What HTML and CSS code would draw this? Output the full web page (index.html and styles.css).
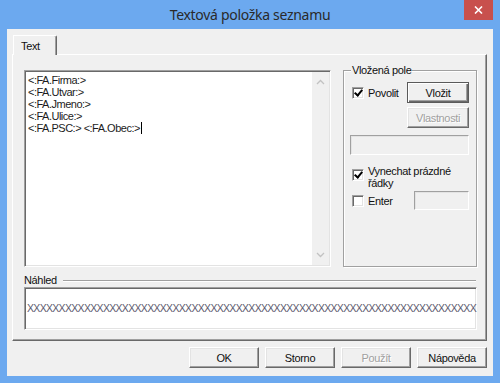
FILE: index.html
```html
<!DOCTYPE html>
<html lang="cs">
<head>
  <meta charset="UTF-8" />
  <title>Textová položka seznamu</title>
  <link rel="stylesheet" href="styles.css">
</head>
<body>
  <div class="window">
    <div class="titlebar">
      <span></span>
      <span class="title">Textová položka seznamu</span>
      <span class="close">
        <svg width="9" height="8" viewBox="0 0 9 8"><path d="M1 0.5 L8 7.5 M8 0.5 L1 7.5" stroke="#fff" stroke-width="1.6"/></svg>
      </span>
    </div>

    <div class="client">
      <div class="tabs">
        <div class="tab">Text</div>
      </div>

      <div class="panel">
        <div class="panel-top">
          <div class="edit">
            <div class="edit-text">
              <div>&lt;:FA.Firma:&gt;</div>
              <div>&lt;:FA.Utvar:&gt;</div>
              <div>&lt;:FA.Jmeno:&gt;</div>
              <div>&lt;:FA.Ulice:&gt;</div>
              <div>&lt;:FA.PSC:&gt; &lt;:FA.Obec:&gt;<span class="caret"></span></div>
            </div>
            <div class="vscroll">
              <svg width="9" height="6" viewBox="0 0 9 6"><path d="M1 5 L4.5 1.5 L8 5" fill="none" stroke="#c2c2c2" stroke-width="1.3"/></svg>
              <svg width="9" height="6" viewBox="0 0 9 6"><path d="M1 1 L4.5 4.5 L8 1" fill="none" stroke="#c2c2c2" stroke-width="1.3"/></svg>
            </div>
          </div>

          <div class="group">
            <div class="group-label">Vložená pole</div>
            <div class="row">
              <label class="check"><span class="box checked"></span>Povolit</label>
              <button class="btn btn-default btn-small">Vložit</button>
            </div>
            <div class="row row-end">
              <button class="btn btn-small" disabled>Vlastnosti</button>
            </div>
            <div class="field field-wide"></div>
            <label class="check check-multi"><span class="box checked"></span>Vynechat prázdné řádky</label>
            <div class="row row-enter">
              <label class="check"><span class="box"></span>Enter</label>
              <div class="field field-short"></div>
            </div>
          </div>
        </div>

        <div class="preview-head">
          <span>Náhled</span>
          <span class="rule"></span>
        </div>
        <div class="preview">
          <div class="preview-x">XXXXXXXXXXXXXXXXXXXXXXXXXXXXXXXXXXXXXXXXXXXXXXXXXXXXXXXXXXXXXXXXXXXXXXX</div>
        </div>
      </div>

      <div class="buttons">
        <button class="btn">OK</button>
        <button class="btn">Storno</button>
        <button class="btn" disabled>Použít</button>
        <button class="btn">Nápověda</button>
      </div>
    </div>
  </div>
</body>
</html>
```

FILE: styles.css
```css
body {
  margin: 0;
  font-family: "Liberation Sans", Arial, sans-serif;
  font-size: 11px;
  color: #111;
}

.window {
  width: 500px;
  height: 383px;
  box-sizing: border-box;
  padding: 0 7px 7px;
  background: #6ca9ef;
}

/* title bar */
.titlebar {
  height: 29px;
  display: grid;
  grid-template-columns: 1fr auto 1fr;
  margin: 0 -7px;
}

.title {
  font-family: "Noto Sans", sans-serif;
  font-size: 14px;
  color: #2a2a2a;
  line-height: 29px;
  letter-spacing: -0.3px;
}

.close {
  justify-self: end;
  width: 29px;
  height: 20px;
  margin-right: 7px;
  background: #c8504d;
  display: flex;
  align-items: center;
  justify-content: center;
}

/* client area */
.client {
  height: 347px;
  background: #f0f0f0;
  padding: 0 6px 0 5px;
  box-sizing: border-box;
  letter-spacing: -0.35px;
}

.tabs {
  display: flex;
  padding-top: 6px;
}

.tab {
  position: relative;
  z-index: 1;
  margin-left: 1px;
  width: 44px;
  height: 20px;
  box-sizing: border-box;
  padding: 4px 0 0 7px;
  background: #f0f0f0;
  border-top: 1px solid #fff;
  border-left: 1px solid #fff;
  border-right: 1px solid #696969;
  box-shadow: inset -1px 0 0 #a0a0a0;
  border-top-right-radius: 2px;
}

.panel {
  margin-top: -1px;
  height: 287px;
  box-sizing: border-box;
  padding: 15px 9px 10px 11px;
  border: 1px solid;
  border-color: #fff #696969 #696969 #fff;
  box-shadow: inset -1px -1px 0 #a0a0a0;
}

.panel-top {
  display: flex;
  gap: 12px;
  height: 197px;
}

/* sunken edit */
.edit {
  width: 307px;
  box-sizing: border-box;
  display: flex;
  background: #fff;
  border: 1px solid;
  border-color: #a0a0a0 #fff #fff #a0a0a0;
  box-shadow: inset 1px 1px 0 #696969, inset -1px -1px 0 #e3e3e3;
}

.edit-text {
  flex: 1;
  padding: 3px 0 0 3px;
  line-height: 12px;
  letter-spacing: -0.5px;
  color: #1c1c1c;
}

.caret {
  display: inline-block;
  width: 1px;
  height: 12px;
  margin-left: 1px;
  background: #000;
  vertical-align: top;
}

.vscroll {
  width: 17px;
  margin: 1px 1px 1px 0;
  background: #f0f0f0;
  display: flex;
  flex-direction: column;
  justify-content: space-between;
  align-items: center;
  padding: 7px 0 7px;
}

/* group box */
.group {
  width: 134px;
  box-sizing: border-box;
  padding: 0 7px 0 6px;
  border: 1px solid #a0a0a0;
  box-shadow: inset 1px 1px 0 #fff, 1px 1px 0 #fff;
  display: flex;
  flex-direction: column;
}

.group-label {
  align-self: flex-start;
  margin: -7px 0 0 1px;
  padding: 0 1px;
  line-height: 12px;
  background: #f0f0f0;
}

.row {
  display: flex;
  align-items: center;
  justify-content: space-between;
  margin-top: 6px;
}

.row-end {
  justify-content: flex-end;
  margin-top: 4px;
}

.row-enter {
  margin-top: 2px;
}

.check {
  display: flex;
  align-items: center;
  gap: 4px;
  margin-left: 2px;
}

.check-multi {
  align-items: flex-start;
  margin-top: 10px;
  line-height: 12px;
  width: 110px;
}

.check-multi .box {
  margin-top: 4px;
  flex: none;
}

.box {
  width: 12px;
  height: 12px;
  box-sizing: border-box;
  background: #fff;
  border: 1px solid;
  border-color: #a0a0a0 #fff #fff #a0a0a0;
  box-shadow: inset 1px 1px 0 #696969, inset -1px -1px 0 #e3e3e3;
  display: inline-flex;
  align-items: center;
  justify-content: center;
}

.box.checked::after {
  content: "";
  width: 3px;
  height: 6px;
  margin-top: -2px;
  border: solid #000;
  border-width: 0 2px 2px 0;
  transform: rotate(40deg);
}

.field {
  box-sizing: border-box;
  background: #f0f0f0;
  border: 1px solid;
  border-color: #a0a0a0 #fff #fff #a0a0a0;
  box-shadow: inset 1px 1px 0 #e3e3e3;
}

.field-wide {
  height: 20px;
  margin-top: 7px;
}

.field-short {
  width: 55px;
  height: 19px;
}

/* buttons */
.btn {
  font: inherit;
  letter-spacing: inherit;
  color: #111;
  width: 70px;
  height: 21px;
  padding: 0;
  background: #f0f0f0;
  border: 1px solid;
  border-color: #fff #696969 #696969 #fff;
  box-shadow: inset -1px -1px 0 #a0a0a0, inset 1px 1px 0 #e3e3e3;
}

.btn-small {
  width: 62px;
}

.btn-default {
  border-color: #5a5a5a;
  box-shadow: inset 1px 1px 0 #fff, inset -1px -1px 0 #696969, inset -2px -2px 0 #a0a0a0;
}

.btn:disabled {
  color: #a0a0a0;
  text-shadow: 1px 1px 0 #fff;
}

/* preview */
.preview-head {
  display: flex;
  align-items: center;
  gap: 6px;
  margin-top: 7px;
  height: 12px;
}

.rule {
  flex: 1;
  height: 1px;
  background: #a0a0a0;
  box-shadow: 0 1px 0 #fff;
  margin-right: 1px;
}

.preview {
  margin-top: 1px;
  height: 43px;
  box-sizing: border-box;
  background: #fff;
  border: 1px solid;
  border-color: #a0a0a0 #fff #fff #a0a0a0;
  box-shadow: inset 1px 1px 0 #696969, inset -1px -1px 0 #e3e3e3;
  padding: 15px 0 0 2px;
}

.preview-x {
  white-space: nowrap;
  font-size: 10.5px;
  line-height: 10px;
  letter-spacing: -0.68px;
  color: #5d5a6e;
}

.buttons {
  display: flex;
  justify-content: flex-end;
  gap: 6px;
  margin-top: 6px;
}
```
